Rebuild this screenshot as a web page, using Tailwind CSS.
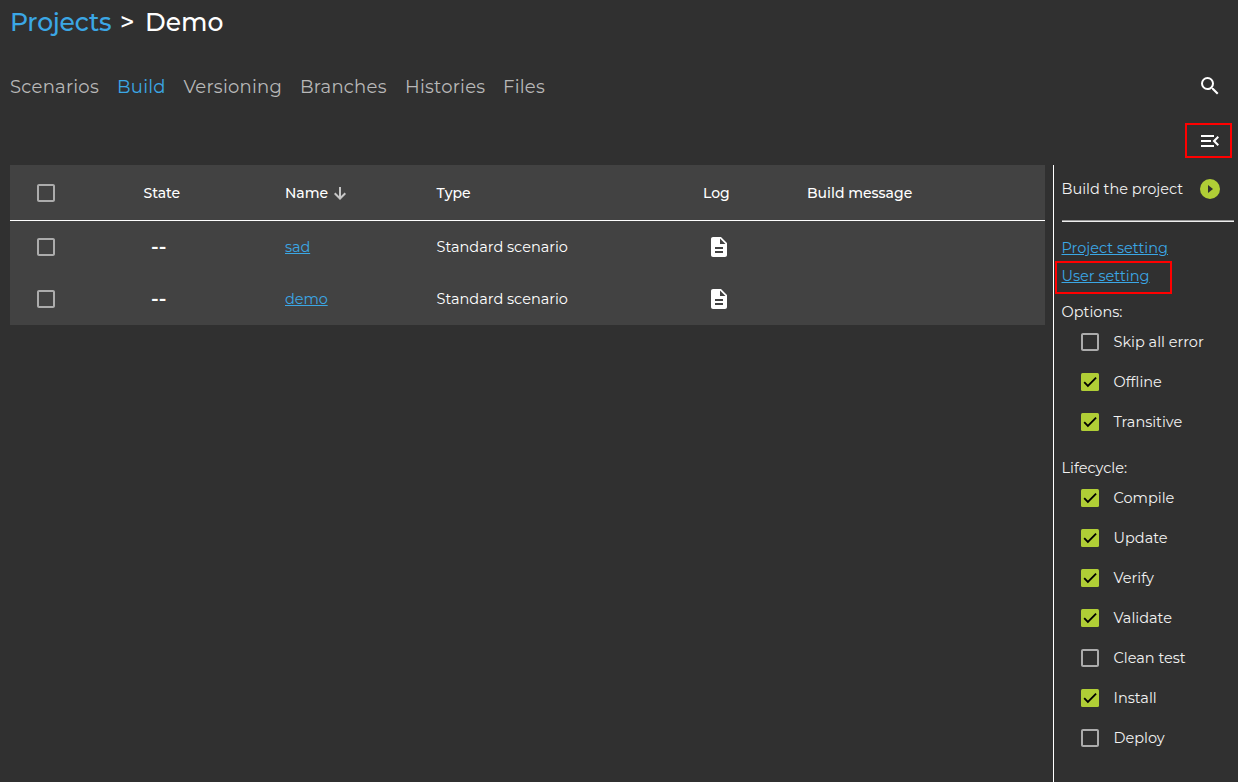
<!DOCTYPE html>
<html lang="en">
<head>
    <meta charset="UTF-8" />
    <meta name="viewport" content="width=device-width, initial-scale=1" />
    <title>Demo - Build</title>
    <script src="https://cdn.jsdelivr.net/npm/@tailwindcss/browser@4"></script>
</head>
<body class="bg-[#303030] text-white font-['Montserrat',Inter,sans-serif] text-[14.5px] leading-5">
<svg class="hidden">
    <symbol id="box" viewBox="0 0 24 24"><path d="M19 5v14H5V5h14m0-2H5c-1.100 0-2 .9-2 2v14c0 1.100.9 2 2 2h14c1.100 0 2-.9 2-2V5c0-1.100-.9-2-2-2z"/></symbol>
    <symbol id="checked" viewBox="0 0 24 24">
        <rect x="3" y="3" width="18" height="18" rx="1.500" fill="#b0ce36"/>
        <path d="M6.200 12.200l3.700 3.700 8.200-8.200" fill="none" stroke="#000" stroke-width="1.800"/>
    </symbol>
    <symbol id="doc" viewBox="0 0 24 24"><path d="M14 2H6c-1.100 0-1.990.9-1.990 2L4 20c0 1.100.89 2 1.990 2H18c1.100 0 2-.9 2-2V8l-6-6zm2 16H8v-2h8v2zm0-4H8v-2h8v2zm-3-5V3.500L18.500 9H13z"/></symbol>
</svg>
<div class="flex flex-col h-screen overflow-hidden">
    <h1 class="flex items-center h-11 pl-[10px] text-[25px] leading-8 font-medium">
        <a class="text-[#3ba7e5] w-[111px] tracking-[-0.200px]">Projects</a>
        <span class="text-[25px] w-[25px] -ml-px mr-px">&gt;</span>
        <span class="-ml-px">Demo</span>
    </h1>
    <div class="flex items-center h-[85px] pl-[10px] pr-4 text-[18px] tracking-[0.250px] text-[#b8b8b8]">
        <nav class="flex flex-1">
            <a class="w-[107px]">Scenarios</a>
            <a class="w-[66.500px] text-[#3ba7e5]">Build</a>
            <a class="w-[116.500px]">Versioning</a>
            <a class="w-[105px]">Branches</a>
            <a class="w-[98px]">Histories</a>
            <a>Files</a>
        </nav>
        <svg class="size-6 mb-[2px] fill-white" viewBox="0 0 24 24"><path d="M15.500 14h-.79l-.28-.27A6.471 6.471 0 0 0 16 9.500 6.500 6.500 0 1 0 9.500 16c1.610 0 3.090-.59 4.230-1.570l.27.28v.79l5 4.990L20.490 19l-4.990-5zm-6 0C7.010 14 5 11.990 5 9.500S7.010 5 9.500 5 14 7.010 14 9.500 11.990 14 9.500 14z"/></svg>
    </div>
    <div class="flex justify-end items-start h-9 pr-4">
        <div class="relative size-6">
            <svg class="size-6 fill-white" viewBox="0 0 24 24"><path d="M3 18h13v-2H3v2zM3 6v2h13V6H3zm0 7h10v-2H3v2zm18-4.410L17.580 12 21 15.410 19.590 17l-5-5 5-5L21 8.590z"/></svg>
            <div class="absolute -left-[13px] -top-[6px] w-[47px] h-[35px] border-2 border-[#f00]"></div>
        </div>
    </div>
    <div class="flex flex-1 min-h-0">
        <div class="ml-[10px] w-[1035px] h-40 bg-[#424242]">
            <div class="grid grid-cols-[133px_142px_151.500px_266.500px_104px_1fr] items-center h-14 border-b border-white text-sm font-medium">
                <svg class="size-6 ml-6 fill-[#acacac]"><use href="#box"/></svg>
                <span class="pl-[0.500px]">State</span>
                <span class="flex items-center">Name
                    <svg class="ml-[6px] mt-px w-3 h-[13px] fill-none stroke-[#c6c6c6] stroke-2" viewBox="0 0 12 13"><path d="M6 0v11.500M.7 6.200L6 11.500l5.300-5.300"/></svg>
                </span>
                <span>Type</span>
                <span>Log</span>
                <span>Build message</span>
            </div>
            <div class="grid grid-cols-[133px_142px_151.500px_266.500px_104px_1fr] items-center h-[52px]">
                <svg class="size-6 ml-6 fill-[#acacac]"><use href="#box"/></svg>
                <span class="pl-2 text-xl font-semibold">--</span>
                <a class="text-[#3ba7e5] underline tracking-[-0.100px]">sad</a>
                <span>Standard scenario</span>
                <svg class="size-6 ml-1 fill-white"><use href="#doc"/></svg>
            </div>
            <div class="grid grid-cols-[133px_142px_151.500px_266.500px_104px_1fr] items-center h-[52px]">
                <svg class="size-6 ml-6 fill-[#acacac]"><use href="#box"/></svg>
                <span class="pl-2 text-xl font-semibold">--</span>
                <a class="text-[#3ba7e5] underline tracking-[-0.100px]">demo</a>
                <span>Standard scenario</span>
                <svg class="size-6 ml-1 fill-white"><use href="#doc"/></svg>
            </div>
        </div>
        <aside class="ml-2 flex-1 border-l border-white pl-[7.500px] pr-1 text-[#f2f2f2]">
            <div class="flex items-center justify-between h-[55px] pr-3 pb-[7px]">
                <span>Build the project</span>
                <svg class="size-6 fill-[#b0ce36]" viewBox="0 0 24 24"><circle cx="12" cy="12" r="10"/><path d="M10 8v8l5-4z" fill="#303030"/></svg>
            </div>
            <hr class="h-[2px] border-t border-[#9a9a9a] bg-[#eee]">
            <div class="pt-3 leading-7 text-[#3ba7e5]">
                <div class="underline">Project setting</div>
                <div class="relative">
                    <span class="underline">User setting</span>
                    <div class="absolute -left-[6.500px] -top-[1px] w-[117px] h-[33px] border-2 border-[#f00]"></div>
                </div>
            </div>
            <div class="pt-3">Options:</div>
            <ul class="pl-[16.500px]">
                <li class="flex items-center h-10 gap-[11.500px]"><svg class="size-6 fill-[#acacac]"><use href="#box"/></svg>Skip all error</li>
                <li class="flex items-center h-10 gap-[11.500px]"><svg class="size-6"><use href="#checked"/></svg>Offline</li>
                <li class="flex items-center h-10 gap-[11.500px]"><svg class="size-6"><use href="#checked"/></svg>Transitive</li>
            </ul>
            <div class="pt-4">Lifecycle:</div>
            <ul class="pl-[16.500px]">
                <li class="flex items-center h-10 gap-[11.500px]"><svg class="size-6"><use href="#checked"/></svg>Compile</li>
                <li class="flex items-center h-10 gap-[11.500px]"><svg class="size-6"><use href="#checked"/></svg>Update</li>
                <li class="flex items-center h-10 gap-[11.500px]"><svg class="size-6"><use href="#checked"/></svg>Verify</li>
                <li class="flex items-center h-10 gap-[11.500px]"><svg class="size-6"><use href="#checked"/></svg>Validate</li>
                <li class="flex items-center h-10 gap-[11.500px]"><svg class="size-6 fill-[#acacac]"><use href="#box"/></svg>Clean test</li>
                <li class="flex items-center h-10 gap-[11.500px]"><svg class="size-6"><use href="#checked"/></svg>Install</li>
                <li class="flex items-center h-10 gap-[11.500px]"><svg class="size-6 fill-[#acacac]"><use href="#box"/></svg>Deploy</li>
            </ul>
        </aside>
    </div>
</div>
</body>
</html>
